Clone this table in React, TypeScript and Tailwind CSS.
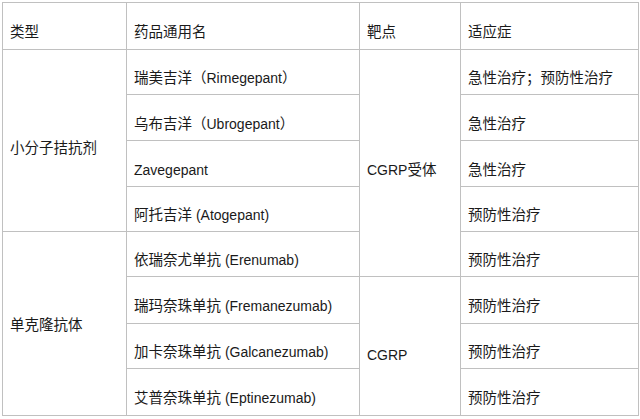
import React from "react";

const font = { fontFamily: '"Liberation Sans", "Noto Sans CJK SC", Arial, sans-serif' };

function T({ s }: { s: string }) {
  const parts = s.split(/([（）]|[\u3000-\u9fff\uff00-\uffef]+)/).filter((p) => p !== "");
  return (
    <>
      {parts.map((p, i) =>
        p === "（" || p === "）" ? (
          <span key={i} className="text-[14.5px] tracking-[-2.5px]">{p}</span>
        ) : /[\u3000-\u9fff\uff00-\uffef]/.test(p) ? (
          <span key={i} className="text-[14.5px]">{p}</span>
        ) : (
          <React.Fragment key={i}>{p}</React.Fragment>
        )
      )}
    </>
  );
}

export default function App() {
  const td = "border border-[#c0c0c0] pl-[7px] pr-1 pt-[14px] pb-0 align-middle text-left font-normal whitespace-nowrap";
  return (
    <div className="w-[640px] h-[419px] bg-white pl-[2px] pt-[2px] text-[14px] text-[#1a1a1a]" style={font}>
      <table className="table-fixed border-collapse w-[636px]">
        <colgroup>
          <col className="w-[124px]" />
          <col className="w-[233px]" />
          <col className="w-[101px]" />
          <col className="w-[178px]" />
        </colgroup>
        <thead>
          <tr className="h-[47px]">
            <th className={td}><T s="类型" /></th>
            <th className={td}><T s="药品通用名" /></th>
            <th className={td}><T s="靶点" /></th>
            <th className={td}><T s="适应症" /></th>
          </tr>
        </thead>
        <tbody>
          <tr className="h-[45px]">
            <td className={td + " !pt-[16px]"} rowSpan={4}><T s="小分子拮抗剂" /></td>
            <td className={td}><T s="瑞美吉洋（Rimegepant）" /></td>
            <td className={td + " !pt-[15px]"} rowSpan={5}><T s="CGRP受体" /></td>
            <td className={td}><T s="急性治疗；预防性治疗" /></td>
          </tr>
          <tr className="h-[46px]">
            <td className={td}><T s="乌布吉洋（Ubrogepant）" /></td>
            <td className={td}><T s="急性治疗" /></td>
          </tr>
          <tr className="h-[46px]">
            <td className={td}>Zavegepant</td>
            <td className={td}><T s="急性治疗" /></td>
          </tr>
          <tr className="h-[45px]">
            <td className={td}><T s="阿托吉洋 (Atogepant)" /></td>
            <td className={td}><T s="预防性治疗" /></td>
          </tr>
          <tr className="h-[45px]">
            <td className={td + " !pt-[4px]"} rowSpan={4}><T s="单克隆抗体" /></td>
            <td className={td}><T s="依瑞奈尤单抗 (Erenumab)" /></td>
            <td className={td}><T s="预防性治疗" /></td>
          </tr>
          <tr className="h-[47px]">
            <td className={td}><T s="瑞玛奈珠单抗 (Fremanezumab)" /></td>
            <td className={td + " !pt-[19px]"} rowSpan={3}>CGRP</td>
            <td className={td}><T s="预防性治疗" /></td>
          </tr>
          <tr className="h-[45px]">
            <td className={td}><T s="加卡奈珠单抗 (Galcanezumab)" /></td>
            <td className={td}><T s="预防性治疗" /></td>
          </tr>
          <tr className="h-[47px]">
            <td className={td}><T s="艾普奈珠单抗 (Eptinezumab)" /></td>
            <td className={td}><T s="预防性治疗" /></td>
          </tr>
        </tbody>
      </table>
    </div>
  );
}
